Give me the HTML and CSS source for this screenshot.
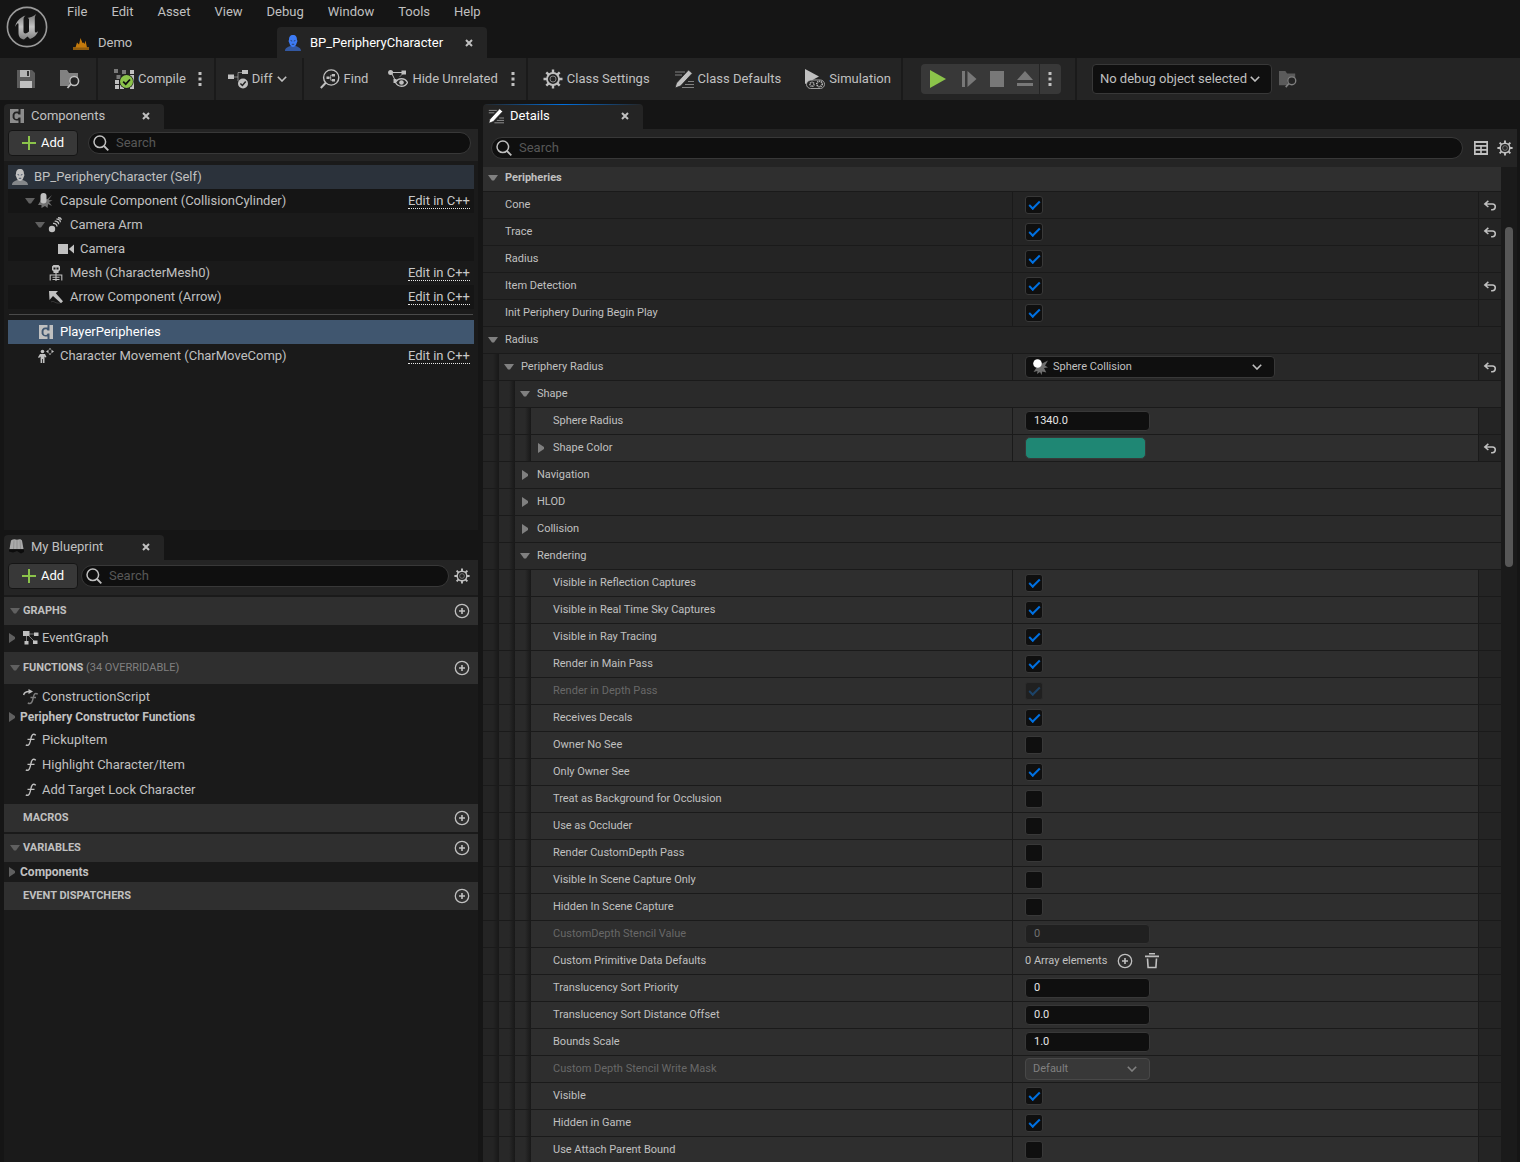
FILE: index.html
```html
<!DOCTYPE html>
<html lang="en">
<head>
<meta charset="utf-8">
<title>BP_PeripheryCharacter</title>
<link rel="stylesheet" href="styles.css">
</head>
<body>
<svg class="sprite" aria-hidden="true">
  <defs>
    <linearGradient id="metal" x1="0" y1="0" x2="0" y2="1"><stop offset="0" stop-color="#777"/><stop offset=".5" stop-color="#c4c4c4"/><stop offset="1" stop-color="#808080"/></linearGradient>
  </defs>
  <symbol id="down" viewBox="0 0 10 6"><path d="M0 0h10L6 5.500H4z"/></symbol>
  <symbol id="right" viewBox="0 0 6 10"><path d="M0 0l6 4v2L0 10z"/></symbol>
  <symbol id="close" viewBox="0 0 8 8"><path d="M1 1l6 6M7 1L1 7" fill="none" stroke="currentColor" stroke-width="2"/></symbol>
  <symbol id="chev" viewBox="0 0 10 6"><path d="M.8 .8L5 5 9.200 .8" fill="none" stroke="currentColor" stroke-width="1.600"/></symbol>
  <symbol id="dots" viewBox="0 0 4 16"><path d="M.5 1h3v3h-3zM.5 6.500h3v3h-3zM.5 12h3v3h-3z"/></symbol>
  <symbol id="search" viewBox="0 0 16 16"><circle cx="6.800" cy="6.800" r="5.800" fill="none" stroke="currentColor" stroke-width="1.500"/><path d="M11 11l4.300 4.300" stroke="currentColor" stroke-width="1.800"/></symbol>
  <symbol id="plus" viewBox="0 0 14 14"><path d="M6 0h2v6h6v2H8v6H6V8H0V6h6z"/></symbol>
  <symbol id="addc" viewBox="0 0 16 16"><circle cx="8" cy="8" r="6.700" fill="none" stroke="currentColor" stroke-width="1.300"/><path d="M7.200 5h1.600v2.200H11v1.600H8.800V11H7.200V8.800H5V7.200h2.200z"/></symbol>
  <symbol id="gear" viewBox="0 0 20 20"><circle cx="10" cy="10" r="6" fill="none" stroke="currentColor" stroke-width="1.800"/><circle cx="10" cy="10" r="3" fill="none" stroke="currentColor" opacity=".6"/><path d="M10 .5V4M10 16v3.500M.5 10H4M16 10h3.500M3.300 3.300l2.400 2.400M14.300 14.300l2.400 2.400M3.300 16.700l2.400-2.400M14.300 5.700l2.400-2.400" stroke="currentColor" stroke-width="2.400"/></symbol>
  <symbol id="reset" viewBox="0 0 12 10"><path d="M4.500 .8L1.300 3.600l3.200 2.800M1.500 3.600h6.700a2.600 2.600 0 0 1 0 5.200H7" fill="none" stroke="currentColor" stroke-width="1.400"/></symbol>
  <symbol id="save" viewBox="0 0 18 18"><path d="M0 0h15l3 3v15H0z" fill="#5c5c5c"/><path d="M3 0h10v7H3z" fill="#b5b5b5"/><path d="M10 1h2v5h-2z" fill="#333"/><path d="M3 11h12v7H3z" fill="#c0c0c0"/></symbol>
  <symbol id="browse" viewBox="0 0 20 20"><path d="M0 1h7l2 3h9v5.500a5 5 0 0 0-8 6V17H0z" opacity=".6"/><circle cx="14.200" cy="12" r="4.400" fill="none" stroke="currentColor" stroke-width="1.500"/><path d="M11 15l-3.500 4" stroke="currentColor" stroke-width="1.800"/></symbol>
  <symbol id="compile" viewBox="0 0 20 20"><path d="M0 0h4v4H0zM8 1h4v4H8zM2.500 6h4v4h-4z" opacity=".55"/><path d="M16 1h4v4h-4zM1 11h4v4H1zM1 16h4v4H1zM6 16h4v4H6zM16 6h4v14h-4z"/><circle cx="12.500" cy="12.500" r="7.200" fill="#1c1c1c"/><circle cx="12.500" cy="12.500" r="6.500" fill="#8bc34a"/><path d="M9.200 12.600l2.500 2.500 4.300-4.600" fill="none" stroke="#111" stroke-width="1.800"/></symbol>
  <symbol id="diff" viewBox="0 0 20 20"><path d="M0 5.500h6v4.500H0zM14 1h6v4h-6z"/><path d="M6 8h4M10 12V3.500h4" fill="none" stroke="currentColor" opacity=".6"/><circle cx="15" cy="14.500" r="5"/><path d="M12.400 14.500l2 2 3.300-4" fill="none" stroke="#242424" stroke-width="1.500"/></symbol>
  <symbol id="find" viewBox="0 0 20 20"><circle cx="11.200" cy="8.500" r="7.600" fill="none" stroke="currentColor" stroke-width="1.400"/><path d="M6 13.500L.8 19" stroke="currentColor" stroke-width="2"/><path d="M6.500 7.500h3v2.500h-3zM12 5h3v2.500h-3zM12 10h3v2.500h-3z"/><path d="M9.500 8.700h1.300M12 6.200h-1.300v5H12" fill="none" stroke="currentColor" stroke-width=".8"/></symbol>
  <symbol id="hide" viewBox="0 0 20 20"><circle cx="2.600" cy="3.500" r="2.500"/><path d="M13.500 1.500h4.500v4h-4.500zM5.500 10h3v4h-3z"/><path d="M4 3.500h10M4 5l3 6" stroke="currentColor" stroke-width="1"/><path d="M14.500 5l-3 3" stroke="currentColor" opacity=".6"/><path d="M7.500 13.500c2.500-5 9.500-5 12 0-2.500 5-9.500 5-12 0z" fill="#242424" stroke="currentColor" stroke-width="1.300"/><circle cx="13.500" cy="13.500" r="2.300"/></symbol>
  <symbol id="pencil" viewBox="0 0 20 20"><path d="M1 3h10M1 6h7M14 12.500h6M11 15.500h9M8 18.500h12" stroke="currentColor" opacity=".6" stroke-width="1"/><path d="M2.500 14L14.500 1l3.800 3.300L6.500 17 1 19z" fill="var(--pen, #c0c0c0)" stroke="#242424" stroke-width=".8"/></symbol>
  <symbol id="sim" viewBox="0 0 20 20"><path d="M0 0l14 7.500L0 15z"/><rect x="1.500" y="11" width="18" height="8.500" rx="4.200" fill="#242424" stroke="currentColor" opacity=".8"/><circle cx="7" cy="15.300" r="2" fill="none" stroke="currentColor" stroke-width="1.500" stroke-dasharray="1 .6"/><circle cx="14.500" cy="15" r="2.700" fill="none" stroke="currentColor" stroke-width="1.600" stroke-dasharray="1.200 .8"/></symbol>
  <symbol id="person" viewBox="0 0 16 16"><path d="M0 16c0-3 3-4 5-5h6c2 1 5 2 5 5z" opacity=".6"/><path d="M8 0c3 0 4 2 4 5l.5 1-1 2.500C11 10.500 9.500 12 8 12s-3-1.500-3.500-3.500l-1-2.500L4 5c0-3 1-5 4-5z"/><path d="M5.600 5.500l1.600.6M10.400 5.500l-1.600.6M6.800 9.300h2.400" stroke="#26364f" stroke-width=".8"/></symbol>
  <symbol id="demo" viewBox="0 0 16 16"><path d="M0 12h16v3H0z" opacity=".7"/><path d="M2.500 12.500l1.500-5 2 2L7.500 3l2 5 1-.5 1 1.500 1-3.500 1.500 7z"/></symbol>
  <symbol id="comp" viewBox="0 0 14 14"><path fill-rule="evenodd" d="M0 0h8.500v2.500H6.300A3.800 3.800 0 0 0 2.600 7a3.800 3.800 0 0 0 3.700 4.500h2.200V14H0zM10.500 0H14v14h-3.500V8.500H8.600C8 9.500 7.500 10 6.500 10 4.500 10 4.500 8.500 4.500 7S4.800 4.200 6.600 4.200c1 0 1.500.4 1.900 1.300h2z"/></symbol>
  <symbol id="capsule" viewBox="0 0 16 16"><path d="M3 7L0 12l3.500 0 0 3 3.500-2 2.500 2 .5-4 4 2-3-4 3.500-1.500-4-.5 3.500-5L9.500 6z" opacity=".55"/><rect x="2.500" y="0" width="6" height="10.500" rx="3"/></symbol>
  <symbol id="arm" viewBox="0 0 16 16"><circle cx="4" cy="12" r="3.200"/><path d="M5 6.500c2-.5 4 1 4 3M6.700 4.300c2-.5 4 1 4 3M8.400 2.200c2-.5 4 1 4 3M10 .8c1.500-.2 3 .6 3.500 2" fill="none" stroke="currentColor" stroke-width="1.300"/></symbol>
  <symbol id="camera" viewBox="0 0 16 16"><path d="M0 3h10v10H0zM16 3.500v9L10.800 8z"/></symbol>
  <symbol id="skel" viewBox="0 0 16 16"><path fill-rule="evenodd" d="M5.500 0h5L12 1.500V5l-1.500 1.500V8h-5V6.500L4 5V1.500zM5.500 2.500v2h2v-2zM8.500 2.500v2h2v-2z"/><path d="M2.200 15.500V10h3M13.800 15.500V10h-3M5 10h6M4.500 12.300h7M4.500 14.500h7M8 8v8" fill="none" stroke="currentColor" stroke-width="1.100"/></symbol>
  <symbol id="arrow" viewBox="0 0 16 16"><path d="M1 2h9L7.800 4.200l7.200 8-2 2-8-7.200L1.500 11z"/><path d="M3 13c3-2 4 2 9 1" fill="none" stroke="currentColor" opacity=".2"/></symbol>
  <symbol id="move" viewBox="0 0 16 16"><circle cx="4.500" cy="3.500" r="1.800"/><path d="M2 6h5l1.500 3-1 .6L6.500 8.500V15H5v-4h-.8v4H2.600V8.500L1 10 0 9.300z"/><path d="M10.500 5.300L8 3.500l2.500-1.800zM13.500 5.300L16 3.500l-2.500-1.800zM12 0l1.500 1.500h-3zM12 7l1.500-1.500h-3z"/></symbol>
  <symbol id="graph" viewBox="0 0 16 16"><path d="M0 1h6.500v5H0zM11 2.500h4.500v3.500h-4.500zM1.500 11h4v3.500h-4zM10 10.500h4.500v3.500H10z"/><path d="M6 4h6M3.500 5v7M5 5l7 7" stroke="currentColor" opacity=".6"/></symbol>
  <symbol id="func" viewBox="0 0 16 16"><path d="M12.800 3.200C10 1 8.500 3 7.800 7S6 14.500 2.800 12.800M4.500 7.400h7" fill="none" stroke="currentColor" stroke-width="1.400"/></symbol>
  <symbol id="ctor" viewBox="0 0 16 16"><path d="M.6 6C1.300 3 3.500 2.500 6 2.500" stroke="currentColor" fill="none" stroke-width="1.400"/><path d="M5.500 0l4.500 2.600L5.500 5z"/><path d="M14.800 5.200C12 3.500 11 5 10.300 8.500S8.600 15.800 4.800 14M7.500 8.500H13" fill="none" stroke="currentColor" stroke-width="1.400" opacity=".6"/></symbol>
  <symbol id="book" viewBox="0 0 16 16"><path d="M2 1.500c2-1.500 4-1.500 6-.7 2-.8 4-.8 5 .7L14.500 10H.5z" fill="#aaa"/><path d="M5 1.500L4.500 10M8 1v9M11 1.500l.6 8.500" stroke="#888" stroke-width=".7"/><path d="M0 10.500h15v2.500l-3 1.500-4-2.500-4 1.500-4-1z" fill="#0c0c0c"/></symbol>
  <symbol id="sphere" viewBox="0 0 16 16"><path d="M4 8L.5 13l4-1-.5 3 3-2 1.500 3 .8-3.500 4 1L11 9l4-.5L12 6.500l3-5L10 4z" opacity=".55"/><circle cx="4.500" cy="4.500" r="4.300" fill="#fff"/></symbol>
  <symbol id="trash" viewBox="0 0 14 16"><path d="M4 0h6v1.500H4zM0 2.500h14v1.700H0z"/><path d="M2.500 5.500l.6 9h7.800l.6-9" fill="none" stroke="currentColor" stroke-width="1.600"/></symbol>
  <symbol id="tablei" viewBox="0 0 14 14"><path fill-rule="evenodd" d="M0 0h14v14H0zM1.700 2v2h10.600V2zM1.700 5.700V8h4.500V5.700zM7.800 5.700V8h4.500V5.700zM1.700 9.700V12h4.500V9.700zM7.800 9.700V12h4.500V9.700z"/></symbol>
</svg>

<header class="top">
  <svg class="logo" viewBox="0 0 42 42" role="img" aria-label="Unreal Engine"><circle cx="21" cy="21" r="19.600" fill="#151515" stroke="#9a9a9a" stroke-width="1.600"/><path fill="url(#metal)" d="M9 21c1-5 4.500-9.500 10.500-11.500-1.500 1.500-2 2.500-2 4v12c0 2 2 2.500 3.500 1.500l2-1.500V13.500c0-1-.8-1.500-1.800-1.500 3-.5 6.500-1.800 9-4-1 1.500-1.400 3-1.400 5V25c0 1.500 1 2.300 3.200.3C30.500 30 27 32 24 33l-2.500-2.500L18 33.500c-3.500-.3-5.500-3-5.500-6.500V18.500c0-2-1.500-1.500-3.500 2.500z"/></svg>
  <div class="topmain">
    <nav class="menu">
      <button>File</button><button>Edit</button><button>Asset</button><button>View</button><button>Debug</button><button>Window</button><button>Tools</button><button>Help</button>
    </nav>
    <div class="doctabs">
      <div class="doctab"><svg class="i16 orange"><use href="#demo"/></svg><span>Demo</span></div>
      <div class="doctab on"><svg class="i16 blue"><use href="#person"/></svg><span>BP_PeripheryCharacter</span><button class="x" aria-label="Close"><svg><use href="#close"/></svg></button></div>
    </div>
  </div>
</header>

<div class="toolbar">
  <div class="tgroup g-file">
    <button aria-label="Save"><svg class="i18"><use href="#save"/></svg></button>
    <button aria-label="Browse"><svg class="i20"><use href="#browse"/></svg></button>
  </div>
  <div class="tgroup g-compile">
    <button><svg class="i20"><use href="#compile"/></svg>Compile</button>
    <button aria-label="Compile options"><svg class="dots"><use href="#dots"/></svg></button>
  </div>
  <div class="tgroup g-diff">
    <button><svg class="i20"><use href="#diff"/></svg>Diff<svg class="chev"><use href="#chev"/></svg></button>
  </div>
  <div class="tgroup g-find">
    <button><svg class="i20"><use href="#find"/></svg>Find</button>
    <button><svg class="i20"><use href="#hide"/></svg>Hide Unrelated</button>
    <button aria-label="Hide options"><svg class="dots"><use href="#dots"/></svg></button>
  </div>
  <div class="tgroup g-class">
    <button><svg class="i20"><use href="#gear"/></svg>Class Settings</button>
    <button><svg class="i20"><use href="#pencil"/></svg>Class Defaults</button>
    <button><svg class="i20"><use href="#sim"/></svg>Simulation</button>
  </div>
  <div class="tgroup g-play">
    <div class="play">
      <button class="go" aria-label="Play"><svg viewBox="0 0 18 18"><path d="M1 0l16 9L1 18z"/></svg></button>
      <button aria-label="Step"><svg viewBox="0 0 18 18"><path d="M2 1h3v16H2zM7.500 1l9 8-9 8z"/></svg></button>
      <button aria-label="Stop"><svg viewBox="0 0 18 18"><path d="M2 1h14v16H2z"/></svg></button>
      <button aria-label="Eject"><svg viewBox="0 0 18 18"><path d="M9 1l8 9H1zM1 13h16v3H1z"/></svg></button>
      <button class="more" aria-label="Play options"><svg class="dots"><use href="#dots"/></svg></button>
    </div>
  </div>
  <div class="tgroup g-debug">
    <div class="combo debug"><select aria-label="Debug object"><option>No debug object selected</option></select><svg class="chev"><use href="#chev"/></svg></div>
    <button class="dim" aria-label="Browse debug object"><svg class="i18"><use href="#browse"/></svg></button>
  </div>
</div>

<main class="work">
  <div class="left">
    <section class="dock">
      <div class="tab"><svg class="i14 grey"><use href="#comp"/></svg><span>Components</span><button class="x" aria-label="Close"><svg><use href="#close"/></svg></button></div>
      <div class="bar">
        <button class="add"><svg><use href="#plus"/></svg>Add</button>
        <label class="search wide"><svg class="i16"><use href="#search"/></svg><input type="text" placeholder="Search" aria-label="Search components"></label>
      </div>
      <div class="tree">
        <div class="node self"><svg class="i16"><use href="#person"/></svg><span>BP_PeripheryCharacter (Self)</span></div>
        <div class="node n1 odd"><i><svg class="dn"><use href="#down"/></svg></i><svg class="i16"><use href="#capsule"/></svg><span>Capsule Component (CollisionCylinder)</span><a href="#">Edit in C++</a></div>
        <div class="node n2"><i><svg class="dn"><use href="#down"/></svg></i><svg class="i16"><use href="#arm"/></svg><span>Camera Arm</span></div>
        <div class="node n3 odd"><i></i><svg class="i16"><use href="#camera"/></svg><span>Camera</span></div>
        <div class="node n2"><i></i><svg class="i16"><use href="#skel"/></svg><span>Mesh (CharacterMesh0)</span><a href="#">Edit in C++</a></div>
        <div class="node n2 odd"><i></i><svg class="i16"><use href="#arrow"/></svg><span>Arrow Component (Arrow)</span><a href="#">Edit in C++</a></div>
        <hr>
        <div class="node n1 sel"><i></i><svg class="i16 pad"><use href="#comp"/></svg><span>PlayerPeripheries</span></div>
        <div class="node n1"><i></i><svg class="i16"><use href="#move"/></svg><span>Character Movement (CharMoveComp)</span><a href="#">Edit in C++</a></div>
      </div>
    </section>

    <section class="dock">
      <div class="tab"><svg class="i16"><use href="#book"/></svg><span>My Blueprint</span><button class="x" aria-label="Close"><svg><use href="#close"/></svg></button></div>
      <div class="bar tall">
        <button class="add"><svg><use href="#plus"/></svg>Add</button>
        <label class="search"><svg class="i16"><use href="#search"/></svg><input type="text" placeholder="Search" aria-label="Search blueprint"></label>
        <button class="ib" aria-label="Settings"><svg class="i16"><use href="#gear"/></svg></button>
      </div>
      <div class="bp">
        <div class="head"><i><svg class="dn"><use href="#down"/></svg></i><h3>GRAPHS</h3><button class="ib" aria-label="Add graph"><svg class="i16"><use href="#addc"/></svg></button></div>
        <div class="item graph"><i><svg class="rt"><use href="#right"/></svg></i><svg class="i16"><use href="#graph"/></svg><span>EventGraph</span></div>
        <div class="head big"><i><svg class="dn"><use href="#down"/></svg></i><h3>FUNCTIONS <small>(34 OVERRIDABLE)</small></h3><button class="ib" aria-label="Add function"><svg class="i16"><use href="#addc"/></svg></button></div>
        <div class="item first"><i></i><svg class="i16"><use href="#ctor"/></svg><span>ConstructionScript</span></div>
        <div class="cat"><i><svg class="rt"><use href="#right"/></svg></i>Periphery Constructor Functions</div>
        <div class="item"><i></i><svg class="i16"><use href="#func"/></svg><span>PickupItem</span></div>
        <div class="item"><i></i><svg class="i16"><use href="#func"/></svg><span>Highlight Character/Item</span></div>
        <div class="item"><i></i><svg class="i16"><use href="#func"/></svg><span>Add Target Lock Character</span></div>
        <div class="head gap"><i></i><h3>MACROS</h3><button class="ib" aria-label="Add macro"><svg class="i16"><use href="#addc"/></svg></button></div>
        <div class="head"><i><svg class="dn"><use href="#down"/></svg></i><h3>VARIABLES</h3><button class="ib" aria-label="Add variable"><svg class="i16"><use href="#addc"/></svg></button></div>
        <div class="cat"><i><svg class="rt"><use href="#right"/></svg></i>Components</div>
        <div class="head"><i></i><h3>EVENT DISPATCHERS</h3><button class="ib" aria-label="Add dispatcher"><svg class="i16"><use href="#addc"/></svg></button></div>
      </div>
    </section>
  </div>

  <section class="dock details">
    <div class="tab on"><svg class="i16 white"><use href="#pencil"/></svg><span>Details</span><button class="x" aria-label="Close"><svg><use href="#close"/></svg></button></div>
    <div class="bar dbar">
      <label class="search"><svg class="i16"><use href="#search"/></svg><input type="text" placeholder="Search" aria-label="Search details"></label>
      <button class="ib" aria-label="Property matrix"><svg class="i14"><use href="#tablei"/></svg></button>
      <button class="ib" aria-label="Settings"><svg class="i16"><use href="#gear"/></svg></button>
    </div>
    <div class="dbody">
      <div class="props">
        <div class="row title"><div class="name"><i><svg class="dn"><use href="#down"/></svg></i>Peripheries</div></div>
        <div class="row"><div class="name"><i></i><label for="p1">Cone</label></div><div class="val"><input type="checkbox" id="p1" checked></div><div class="rst"><button aria-label="Reset"><svg><use href="#reset"/></svg></button></div></div>
        <div class="row"><div class="name"><i></i><label for="p2">Trace</label></div><div class="val"><input type="checkbox" id="p2" checked></div><div class="rst"><button aria-label="Reset"><svg><use href="#reset"/></svg></button></div></div>
        <div class="row"><div class="name"><i></i><label for="p3">Radius</label></div><div class="val"><input type="checkbox" id="p3" checked></div><div class="rst"></div></div>
        <div class="row"><div class="name"><i></i><label for="p4">Item Detection</label></div><div class="val"><input type="checkbox" id="p4" checked></div><div class="rst"><button aria-label="Reset"><svg><use href="#reset"/></svg></button></div></div>
        <div class="row"><div class="name"><i></i><label for="p5">Init Periphery During Begin Play</label></div><div class="val"><input type="checkbox" id="p5" checked></div><div class="rst"></div></div>
        <div class="row group"><div class="name"><i><svg class="dn"><use href="#down"/></svg></i>Radius</div></div>
        <div class="row l1"><div class="name"><i><svg class="dn"><use href="#down"/></svg></i><label for="p6">Periphery Radius</label></div><div class="val"><div class="combo sphere"><svg class="i16"><use href="#sphere"/></svg><select id="p6"><option>Sphere Collision</option></select><svg class="chev"><use href="#chev"/></svg></div></div><div class="rst"><button aria-label="Reset"><svg><use href="#reset"/></svg></button></div></div>
        <div class="row l2 group"><div class="name"><i><svg class="dn"><use href="#down"/></svg></i>Shape</div></div>
        <div class="row l3"><div class="name"><i></i><label for="p7">Sphere Radius</label></div><div class="val"><input type="text" id="p7" value="1340.0"></div><div class="rst"></div></div>
        <div class="row l3"><div class="name"><i><svg class="rt"><use href="#right"/></svg></i>Shape Color</div><div class="val"><button class="color" aria-label="Shape Color"></button></div><div class="rst"><button aria-label="Reset"><svg><use href="#reset"/></svg></button></div></div>
        <div class="row l2 group"><div class="name"><i><svg class="rt"><use href="#right"/></svg></i>Navigation</div></div>
        <div class="row l2 group"><div class="name"><i><svg class="rt"><use href="#right"/></svg></i>HLOD</div></div>
        <div class="row l2 group"><div class="name"><i><svg class="rt"><use href="#right"/></svg></i>Collision</div></div>
        <div class="row l2 group"><div class="name"><i><svg class="dn"><use href="#down"/></svg></i>Rendering</div></div>
        <div class="row l3"><div class="name"><i></i><label for="r1">Visible in Reflection Captures</label></div><div class="val"><input type="checkbox" id="r1" checked></div><div class="rst"></div></div>
        <div class="row l3"><div class="name"><i></i><label for="r2">Visible in Real Time Sky Captures</label></div><div class="val"><input type="checkbox" id="r2" checked></div><div class="rst"></div></div>
        <div class="row l3"><div class="name"><i></i><label for="r3">Visible in Ray Tracing</label></div><div class="val"><input type="checkbox" id="r3" checked></div><div class="rst"></div></div>
        <div class="row l3"><div class="name"><i></i><label for="r4">Render in Main Pass</label></div><div class="val"><input type="checkbox" id="r4" checked></div><div class="rst"></div></div>
        <div class="row l3 off"><div class="name"><i></i><label for="r5">Render in Depth Pass</label></div><div class="val"><input type="checkbox" id="r5" checked disabled></div><div class="rst"></div></div>
        <div class="row l3"><div class="name"><i></i><label for="r6">Receives Decals</label></div><div class="val"><input type="checkbox" id="r6" checked></div><div class="rst"></div></div>
        <div class="row l3"><div class="name"><i></i><label for="r7">Owner No See</label></div><div class="val"><input type="checkbox" id="r7"></div><div class="rst"></div></div>
        <div class="row l3"><div class="name"><i></i><label for="r8">Only Owner See</label></div><div class="val"><input type="checkbox" id="r8" checked></div><div class="rst"></div></div>
        <div class="row l3"><div class="name"><i></i><label for="r9">Treat as Background for Occlusion</label></div><div class="val"><input type="checkbox" id="r9"></div><div class="rst"></div></div>
        <div class="row l3"><div class="name"><i></i><label for="r10">Use as Occluder</label></div><div class="val"><input type="checkbox" id="r10"></div><div class="rst"></div></div>
        <div class="row l3"><div class="name"><i></i><label for="r11">Render CustomDepth Pass</label></div><div class="val"><input type="checkbox" id="r11"></div><div class="rst"></div></div>
        <div class="row l3"><div class="name"><i></i><label for="r12">Visible In Scene Capture Only</label></div><div class="val"><input type="checkbox" id="r12"></div><div class="rst"></div></div>
        <div class="row l3"><div class="name"><i></i><label for="r13">Hidden In Scene Capture</label></div><div class="val"><input type="checkbox" id="r13"></div><div class="rst"></div></div>
        <div class="row l3 off"><div class="name"><i></i><label for="r14">CustomDepth Stencil Value</label></div><div class="val"><input type="text" id="r14" value="0" disabled></div><div class="rst"></div></div>
        <div class="row l3"><div class="name"><i></i>Custom Primitive Data Defaults</div><div class="val array"><span>0 Array elements</span><button class="ib" aria-label="Add element"><svg class="i16"><use href="#addc"/></svg></button><button class="ib" aria-label="Remove all"><svg class="bin"><use href="#trash"/></svg></button></div><div class="rst"></div></div>
        <div class="row l3"><div class="name"><i></i><label for="r15">Translucency Sort Priority</label></div><div class="val"><input type="text" id="r15" value="0"></div><div class="rst"></div></div>
        <div class="row l3"><div class="name"><i></i><label for="r16">Translucency Sort Distance Offset</label></div><div class="val"><input type="text" id="r16" value="0.0"></div><div class="rst"></div></div>
        <div class="row l3"><div class="name"><i></i><label for="r17">Bounds Scale</label></div><div class="val"><input type="text" id="r17" value="1.0"></div><div class="rst"></div></div>
        <div class="row l3 off"><div class="name"><i></i><label for="r18">Custom Depth Stencil Write Mask</label></div><div class="val"><div class="combo mask"><select id="r18" disabled><option>Default</option></select><svg class="chev"><use href="#chev"/></svg></div></div><div class="rst"></div></div>
        <div class="row l3"><div class="name"><i></i><label for="r19">Visible</label></div><div class="val"><input type="checkbox" id="r19" checked></div><div class="rst"></div></div>
        <div class="row l3"><div class="name"><i></i><label for="r20">Hidden in Game</label></div><div class="val"><input type="checkbox" id="r20" checked></div><div class="rst"></div></div>
        <div class="row l3"><div class="name"><i></i><label for="r21">Use Attach Parent Bound</label></div><div class="val"><input type="checkbox" id="r21"></div><div class="rst"></div></div>
      </div>
      <div class="scroll"><div class="thumb"></div></div>
    </div>
  </section>
</main>
</body>
</html>
```
FILE: styles.css
```css
*, *::before { box-sizing: border-box; }
html, body { height: 100%; }
body {
  margin: 0;
  display: flex;
  flex-direction: column;
  overflow: hidden;
  background: #151515;
  color: #c0c0c0;
  font: 13px/16px Roboto, sans-serif;
}
button, input, select { font: inherit; color: inherit; }
button { margin: 0; padding: 0; border: 0; background: none; }
svg { flex: none; display: block; fill: currentColor; }
h3, small { margin: 0; font-size: inherit; }
span, label, h3, a { white-space: nowrap; }
.sprite { width: 0; height: 0; position: absolute; }

.i14 { width: 14px; height: 14px; }
.i16 { width: 16px; height: 16px; }
.i18 { width: 18px; height: 18px; }
.i20 { width: 20px; height: 20px; }
.pad { padding: 1px; }
.dn { width: 10px; height: 6px; color: #808080; }
.rt { width: 6px; height: 10px; color: #808080; }
.chev { width: 10px; height: 6px; }
.dots { width: 4px; height: 16px; }
.orange { color: #c47a0c; }
.blue { color: #3d7bf5; }
.grey { color: #8c8c8c; }
.white { --pen: #fff; }

/* title area */
.top { flex: none; display: flex; height: 58px; }
.logo { width: 42px; height: 42px; margin: 6px 7px 0 6px; }
.topmain { flex: 1; display: flex; flex-direction: column; justify-content: space-between; }
.menu { display: flex; height: 24px; }
.menu button { padding: 0 12px; }
.doctabs { display: flex; height: 31px; padding-left: 10px; }
.doctab { display: flex; align-items: center; width: 212px; padding: 0 8px; gap: 9px; border-radius: 4px 4px 0 0; }
.doctab.on { width: 210px; background: #242424; color: #fff; }
.x { display: flex; align-items: center; justify-content: center; width: 20px; height: 16px; margin-left: auto; color: #c0c0c0; }
.x svg { width: 8px; height: 8px; }

/* toolbar */
.toolbar { flex: none; display: flex; height: 42px; background: #242424; }
.tgroup { display: flex; align-items: center; border-right: 2px solid #1a1a1a; }
.tgroup > button { display: flex; align-items: center; gap: 4px; white-space: nowrap; }
.tgroup:last-child { border: 0; }
.g-file { padding: 0 16px 0 17px; gap: 25px; }
.g-compile { padding: 0 12px 0 16px; gap: 12px; }
.g-diff { padding: 0 15px 0 12px; }
.g-find { padding: 0 11px 0 16px; gap: 13px; }
.g-find > button:first-child { margin-right: 7px; }
.g-class { padding: 0 10px 0 15px; gap: 24px; }
.g-play { padding: 0 14px 0 18px; }
.g-debug { padding-left: 15px; gap: 7px; }
.play { display: flex; height: 30px; border-radius: 4px; background: #383838; color: #787878; }
.play button { display: flex; align-items: center; justify-content: center; width: 28px; }
.play svg { width: 18px; height: 18px; }
.play .go { width: 34px; color: #8bc34a; }
.play .more { width: 22px; border-left: 1px solid #242424; color: #c0c0c0; }
.play .dots { width: 4px; height: 16px; }
.dim { color: #808080; }
.combo { display: flex; align-items: center; border: 1px solid #383838; border-radius: 4px; background: #0f0f0f; }
.combo select { flex: 1; min-width: 0; appearance: none; border: 0; padding: 0; background: none; outline: 0; }
.debug { width: 180px; height: 30px; padding: 0 11px 0 7px; }

/* docks */
.work { flex: 1; min-height: 0; display: grid; grid-template-columns: 474fr 1034fr; gap: 5px; padding: 4px 3px 0 4px; }
.left { display: grid; grid-template-rows: 431fr 627fr; min-height: 0; }
.dock { display: flex; flex-direction: column; min-width: 0; min-height: 0; }
.left .dock:first-child { padding-bottom: 5px; }
.tab { flex: none; display: flex; align-items: center; width: 160px; height: 25px; padding: 0 8px 2px 6px; gap: 7px; border-radius: 4px 4px 0 0; background: #242424; }
.tab .i16 { margin: 0 -1px; }
.tab.on { color: #fff; background: linear-gradient(90deg, #242424, #0070e0 50%, #242424) 0 0 / 100% 1px no-repeat #242424; }
.bar { flex: none; display: flex; align-items: center; height: 32px; padding: 0 7px 5px 4px; gap: 4px; background: #242424; }
.bar.tall { height: 35px; padding-bottom: 3px; }
.add { display: flex; align-items: center; justify-content: center; gap: 5px; width: 70px; height: 26px; border: 1px solid #151515; border-radius: 4px; background: #383838; color: #fff; }
.add svg { width: 14px; height: 14px; color: #8bc34a; }
.search { flex: 1; display: flex; align-items: center; height: 22px; margin-left: -1px; padding: 0 12px 0 4px; gap: 7px; border: 1px solid #383838; border-radius: 11px; background: #0f0f0f; }
.search.wide { margin-left: 6px; }
.search input { flex: 1; min-width: 0; border: 0; padding: 0; background: none; outline: 0; }
.search input::placeholder { color: #575757; }
.ib { display: flex; align-items: center; justify-content: center; width: 18px; height: 18px; }

/* component tree */
.tree { flex: 1; padding: 4px; background: #1a1a1a; }
.node { display: flex; align-items: center; height: 24px; padding: 0 4px; gap: 6px; }
.node i { width: 14px; margin-right: -6px; padding-left: 1px; }
.node .dn { color: #606060; }
.node a { margin-left: auto; line-height: 14px; color: #c8c8c8; text-decoration: none; border-bottom: 1px dotted #e8e8e8; }
.n1 { padding-left: 16px; }
.n2 { padding-left: 26px; }
.n3 { padding-left: 36px; }
.odd { background: #151515; }
.self { background: #2b323b; }
.sel { background: #40566f; color: #fff; }
.sel svg { color: #c0c0c0; }
.tree hr { margin: 5px 1px; border: 0; border-top: 1px solid #4a4a4a; }

/* my blueprint */
.bp { flex: 1; padding-top: 2px; background: #1a1a1a; }
.head, .item, .cat { display: flex; align-items: center; }
.head { height: 28px; padding: 0 7px 0 6px; background: #2f2f2f; font-size: 11px; }
.head.big { height: 32px; }
.head i { width: 13px; }
.head h3 { font-weight: 700; }
.head small { font-weight: 400; color: #808080; }
.head .ib { margin-left: auto; }
.head .dn { color: #606060; }
.gap { margin: 2px 0; }
.item { height: 25px; padding-left: 5px; gap: 3px; }
.item.graph { height: 27px; padding-bottom: 2px; }
.item.first { height: 23px; padding-top: 2px; }
.item i { width: 14px; margin-right: -3px; }
.cat { height: 20px; padding-left: 5px; font-size: 12px; font-weight: 700; }
.cat i { width: 11px; }
.item .rt, .cat .rt { color: #606060; }

/* details */
.dbar { height: 38px; padding: 0 3px 0 9px; }
.dbar .search { margin-right: 5px; }
.dbar .ib + .ib { margin-left: 2px; }
.dbody { flex: 1; min-height: 0; display: flex; overflow: hidden; }
.props { flex: 1; min-width: 0; font-size: 11px; }
.row { display: grid; grid-template-columns: 530fr 466fr 22px; height: 27px; border-bottom: 1px solid #1a1a1a; background: #242424; }
.row.group, .row.title { grid-template-columns: 1fr; }
.row.title { height: 25px; background: #2f2f2f; font-weight: 700; }
.name { display: flex; align-items: center; min-width: 0; padding: 0 0 1px 2px; overflow: hidden; }
.title .name { padding-bottom: 3px; }
.name i { display: flex; flex: none; justify-content: center; width: 16px; margin-right: 4px; }
.row:not(.group):not(.title) .name, .val { border-right: 1px solid #1a1a1a; }
.val { display: flex; align-items: center; min-width: 0; padding-left: 12px; }
.rst { display: flex; align-items: center; justify-content: center; background: #242424; }
.rst svg { width: 14px; height: 11px; }
.l1 { background: #282828; }
.l2 { background: #2a2a2a; }
.l3 { background: #2e2e2e; }
.l1 .name { padding-left: 18px; background: linear-gradient(90deg, #242424 10px, #181818 16px, transparent 16px); }
.l2 .name { padding-left: 34px; background: linear-gradient(90deg, #242424 10px, #181818 16px, #282828 16px, #282828 26px, #181818 32px, transparent 32px); }
.l3 .name { padding-left: 50px; background: linear-gradient(90deg, #242424 10px, #181818 16px, #282828 16px, #282828 26px, #181818 32px, #2a2a2a 32px, #2a2a2a 42px, #181818 48px, transparent 48px); }
.off { color: #686868; }
.val input[type=text] { width: 125px; height: 20px; padding: 0 8px 1px; border: 1px solid #383838; border-radius: 4px; background: #0f0f0f; color: #e6e6e6; outline: 0; }
.val input[type=text]:disabled { background: #202020; border-color: #323232; color: #707070; }
.val input[type=checkbox] { appearance: none; display: flex; justify-content: center; width: 18px; height: 18px; margin: 0; border: 1px solid #383838; border-radius: 3px; background: #0f0f0f; }
.val input:checked::before { content: ""; width: 11px; height: 6px; margin-top: 4px; border: solid #0070e0; border-width: 0 0 2px 2px; transform: rotate(-45deg); }
.val input[type=checkbox]:disabled { background: #202020; border-color: #2c2c2c; }
.val input:disabled::before { border-color: #1c4368; }
.sphere { width: 250px; height: 22px; padding: 0 12px 0 7px; gap: 4px; }
.mask { width: 125px; height: 22px; padding: 0 12px 0 7px; background: #383838; border-color: #484848; color: #808080; }
.mask select:disabled { opacity: 1; color: #808080; }
.color { width: 121px; height: 22px; border: 1px solid #383838; border-radius: 5px; background: #1f8774; }
.array { gap: 9px; }
.bin { width: 14px; height: 16px; }
.scroll { flex: none; width: 16px; padding: 60px 4px 0; background: #1a1a1a; }
.thumb { height: 340px; border-radius: 4px; background: #575757; }
```
